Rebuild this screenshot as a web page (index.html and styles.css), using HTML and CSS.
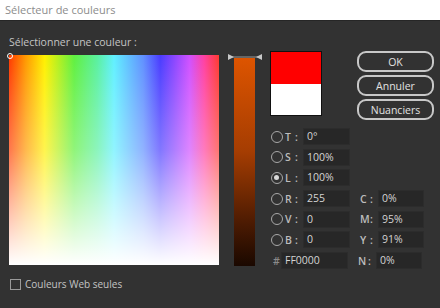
FILE: index.html
```html
<!DOCTYPE html>
<html lang="fr">
<head>
<meta charset="UTF-8">
<title>Sélecteur de couleurs</title>
<link rel="stylesheet" href="styles.css">
</head>
<body>
<div class="titlebar">Sélecteur de couleurs</div>
<div class="dialog">
  <div class="left">
    <div class="caption">Sélectionner une couleur :</div>
    <div class="field"><span class="picker"></span></div>
    <label class="webonly"><span class="check"></span>Couleurs Web seules</label>
  </div>
  <div class="slider-col">
    <svg class="handles" width="36" height="8" viewBox="0 0 36 8">
      <line x1="4" y1="4" x2="32" y2="4" stroke="#9a9a9a" stroke-width="1"/>
      <polygon points="1,1 7,4 1,7" fill="#c8c8c8"/>
      <polygon points="35,1 29,4 35,7" fill="#c8c8c8"/>
    </svg>
    <div class="slider"></div>
  </div>
  <div class="right">
    <div class="top">
      <div class="swatch"><div class="new"></div><div class="old"></div></div>
      <div class="buttons">
        <button class="btn">OK</button>
        <button class="btn">Annuler</button>
        <button class="btn">Nuanciers</button>
      </div>
    </div>
    <div class="form">
      <div class="row"><span class="radio"></span><b>T</b><i>:</i><span class="input">0°</span></div>
      <div class="row"><span class="radio"></span><b>S</b><i>:</i><span class="input">100%</span></div>
      <div class="row"><span class="radio on"></span><b>L</b><i>:</i><span class="input">100%</span></div>
      <div class="row"><span class="radio"></span><b>R</b><i>:</i><span class="input">255</span><b class="second">C</b><i>:</i><span class="input small">0%</span></div>
      <div class="row"><span class="radio"></span><b>V</b><i>:</i><span class="input">0</span><b class="second">M</b><i>:</i><span class="input small">95%</span></div>
      <div class="row"><span class="radio"></span><b>B</b><i>:</i><span class="input">0</span><b class="second">Y</b><i>:</i><span class="input small">91%</span></div>
      <div class="row"><b class="hash">#</b><span class="input hex">FF0000</span><b class="second">N</b><i>:</i><span class="input small">0%</span></div>
    </div>
  </div>
</div>
</body>
</html>
```

FILE: styles.css
```css
* {
    margin: 0;
    padding: 0;
    box-sizing: border-box;
}
body {
    width: 440px;
    height: 308px;
    overflow: hidden;
    background: #323232;
    font-family: "Open Sans", "DejaVu Sans", sans-serif;
    font-size: 10.5px;
    color: #c8c8c8;
}
.titlebar {
    height: 21px;
    background: #ffffff;
    color: #8c8c8c;
    font-size: 11px;
    line-height: 19px;
    padding-left: 5px;
    border-bottom: 1px solid #262626;
}
.dialog {
    display: flex;
    padding-left: 9px;
}
.left {
    width: 210px;
}
.caption {
    height: 34px;
    padding-top: 13px;
    line-height: 16px;
    color: #c4c4c4;
}
.field {
    position: relative;
    width: 210px;
    height: 210px;
    background:
        linear-gradient(to bottom, rgba(255,255,255,0) 0%, rgba(255,255,255,0.3) 45%, #ffffff 100%),
        linear-gradient(to right, #ff3a00 0%, #ff9a00 8%, #fff000 17%, #60f040 31%, #5af0a0 42%, #60f0ff 50%, #6090ff 64%, #4a3cff 72%, #d050ff 86%, #ff40a0 93%, #ff3a30 100%);
}
.picker {
    position: absolute;
    left: -2px;
    top: -2px;
    width: 6px;
    height: 6px;
    border: 1px solid #ffffff;
    border-radius: 50%;
}
.webonly {
    display: flex;
    align-items: center;
    margin-top: 12px;
    height: 14px;
    font-size: 10px;
    color: #c4c4c4;
}
.check {
    width: 11px;
    height: 11px;
    border: 1px solid #9a9a9a;
    margin-left: 1px;
    margin-right: 4px;
}
.slider-col {
    width: 36px;
    margin-left: 8px;
    padding-top: 32px;
}
.handles {
    display: block;
}
.slider {
    width: 21px;
    height: 208px;
    margin-left: 7px;
    margin-top: -3px;
    background: linear-gradient(to bottom, #dd5400 0%, #a53d02 45%, #4a1a02 80%, #1a0800 100%);
}
.right {
    margin-left: 7px;
    padding-top: 30px;
}
.top {
    display: flex;
}
.swatch {
    width: 52px;
    height: 65px;
    border: 1px solid #111111;
}
.new {
    height: 32px;
    background: #ff0000;
}
.old {
    height: 31px;
    background: #ffffff;
}
.buttons {
    margin-left: 35px;
    display: flex;
    flex-direction: column;
    gap: 3px;
}
.btn {
    width: 77px;
    height: 21px;
    border: 2px solid #c8c8c8;
    border-radius: 9px;
    background: #323232;
    color: #e2e2e2;
    font-family: "Open Sans", "DejaVu Sans", sans-serif;
    font-size: 10.5px;
    font-weight: 400;
}
.form {
    margin-top: 8px;
    display: flex;
    flex-direction: column;
    gap: 3.7px;
}
.row {
    display: flex;
    align-items: center;
    height: 17px;
}
.row b {
    font-weight: 600;
    color: #bdbdbd;
    width: 9px;
}
.row i {
    font-style: normal;
    font-weight: 600;
    color: #bdbdbd;
    width: 9px;
    padding-left: 1px;
}
.radio {
    width: 12px;
    height: 12px;
    border: 1.5px solid #a8a8a8;
    border-radius: 50%;
    margin-left: 1px;
    margin-right: 2px;
    position: relative;
}
.radio.on::after {
    content: "";
    position: absolute;
    left: 2px;
    top: 2px;
    width: 5px;
    height: 5px;
    border-radius: 50%;
    background: #d8d8d8;
}
.input {
    width: 47px;
    height: 17px;
    line-height: 15px;
    padding-left: 3px;
    background: #272727;
    border: 1px solid #2c2c2c;
    color: #d4d4d4;
}
.input.small {
    width: 46px;
}
.input.hex {
    width: 67px;
}
.row .second {
    margin-left: 10px;
}
.row .hash {
    width: 11px;
    padding-left: 3px;
    color: #8a8a8a;
}
```
